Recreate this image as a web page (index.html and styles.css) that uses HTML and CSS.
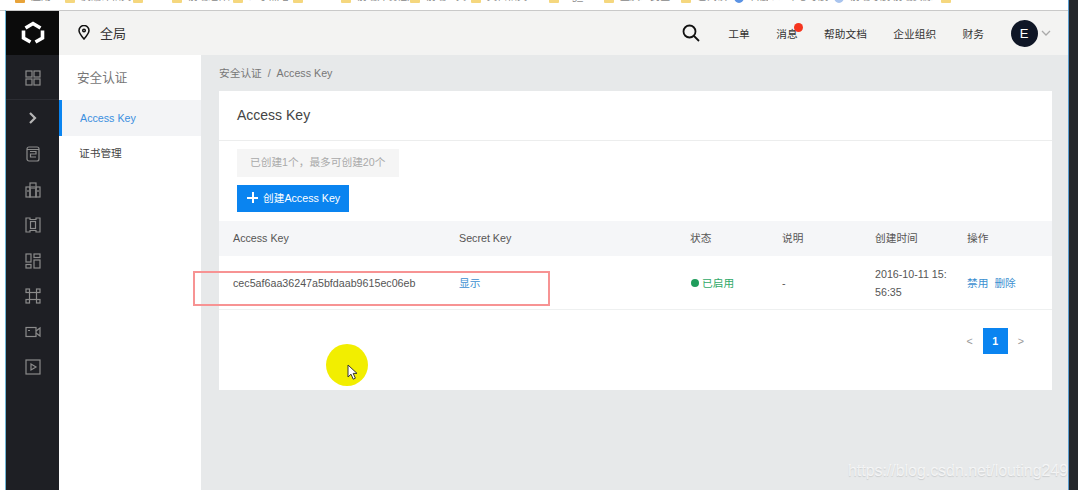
FILE: index.html
```html
<!DOCTYPE html>
<html lang="zh-CN">
<head>
    <meta charset="UTF-8">
    <title>Access Key</title>
    <link rel="stylesheet" href="styles.css">
</head>
<body>
<div class="screen">
    <!-- browser bookmarks, cut off by the capture -->
    <div class="bookmarks">
        <span class="mark"><i class="apps"></i>应用</span>
        <span class="mark"><i class="folder"></i>反编译相关</span>
        <span class="mark"><i class="folder"></i>AE</span>
        <span class="mark"><i class="folder"></i>前端组件库</span>
        <span class="mark"><i class="folder"></i>少了点啥</span>
        <span class="mark"><i class="folder"></i>html</span>
        <span class="mark"><i class="folder"></i>前端开发框架</span>
        <span class="mark"><i class="folder"></i>前端工具</span>
        <span class="mark"><i class="folder"></i>文档相关</span>
        <span class="mark"><i class="folder"></i>Vg_HS</span>
        <span class="mark"><i class="folder"></i>重庆人民医</span>
        <span class="mark"><i class="folder"></i>已阅读</span>
        <span class="mark"><i class="globe"></i>百度</span>
        <span class="mark">个人中心导航</span>
        <span class="mark"><i class="globe pale"></i>前端导航 前端资源</span>
        <span class="mark"><i class="folder"></i>Recent</span>
    </div>

    <div class="app">
        <nav class="rail">
            <div class="logo">
                <svg width="26" height="26" viewBox="0 0 26 26" fill="none" stroke="#fff" stroke-width="3.6">
                    <path d="M5.500 8 13 3.500 20.500 8"/>
                    <path d="M22.500 10.500v7.500l-7 4"/>
                    <path d="M3.500 10.500v7.500l7 4"/>
                </svg>
            </div>
            <div class="rail-item rail-first">
                <svg width="16" height="16" viewBox="0 0 16 16" fill="none" stroke="#8b8b8b" stroke-width="1.2">
                    <rect x="1" y="1" width="6" height="6"/><rect x="9" y="1" width="6" height="6"/>
                    <rect x="1" y="9" width="6" height="6"/><rect x="9" y="9" width="6" height="6"/>
                </svg>
            </div>
            <div class="rail-item rail-arrow">
                <svg width="10" height="14" viewBox="0 0 10 14" fill="none" stroke="#b5b5b5" stroke-width="2.2">
                    <path d="M2 2l5 5-5 5"/>
                </svg>
            </div>
            <div class="rail-item">
                <svg width="14" height="16" viewBox="0 0 14 16" fill="none" stroke="#8b8b8b" stroke-width="1.2">
                    <rect x="1" y="1" width="12" height="14" rx="2"/><path d="M4 5.500h6v2.500H4.500v3H10M1 3.500h12"/>
                </svg>
            </div>
            <div class="rail-item">
                <svg width="16" height="16" viewBox="0 0 16 16" fill="none" stroke="#8b8b8b" stroke-width="1.2">
                    <rect x="5" y="1" width="6" height="14"/><rect x="1" y="5" width="4" height="10"/><rect x="11" y="5" width="4" height="10"/>
                    <path d="M7 4v3M9 4v3M3 8v2M13 8v2"/>
                </svg>
            </div>
            <div class="rail-item">
                <svg width="16" height="16" viewBox="0 0 16 16" fill="none" stroke="#8b8b8b" stroke-width="1.2">
                    <path d="M1 1h4v1.500h6V1h4v14h-4v-1.500H5V15H1z"/><rect x="5.500" y="4.500" width="5" height="7"/>
                </svg>
            </div>
            <div class="rail-item">
                <svg width="16" height="16" viewBox="0 0 16 16" fill="none" stroke="#8b8b8b" stroke-width="1.2">
                    <rect x="1" y="1" width="5" height="8"/><rect x="1" y="11.500" width="5" height="3.500"/>
                    <rect x="9" y="1" width="6" height="3.500"/><rect x="9" y="7" width="6" height="8"/>
                </svg>
            </div>
            <div class="rail-item">
                <svg width="16" height="16" viewBox="0 0 16 16" fill="none" stroke="#8b8b8b" stroke-width="1.2">
                    <rect x="1" y="1" width="3.500" height="3.500"/><rect x="11.500" y="1" width="3.500" height="3.500"/>
                    <rect x="1" y="11.500" width="3.500" height="3.500"/><rect x="11.500" y="11.500" width="3.500" height="3.500"/>
                    <rect x="4.500" y="4.500" width="7" height="7"/>
                </svg>
            </div>
            <div class="rail-item">
                <svg width="16" height="12" viewBox="0 0 16 12" fill="none" stroke="#8b8b8b" stroke-width="1.2">
                    <rect x="1" y="1.500" width="10" height="9"/><path d="M11 5l4-3v8l-4-3M3 4.500h2"/>
                </svg>
            </div>
            <div class="rail-item">
                <svg width="16" height="16" viewBox="0 0 16 16" fill="none" stroke="#8b8b8b" stroke-width="1.2">
                    <rect x="1" y="1" width="14" height="14"/><path d="M6 5l5 3-5 3z"/>
                </svg>
            </div>
        </nav>

        <div class="content">
            <header class="topbar">
                <div class="region">
                    <svg width="12" height="15" viewBox="0 0 12 15" fill="none" stroke="#111" stroke-width="1.500">
                        <path d="M6 14C3 10.500 1 8 1 5.500a5 5 0 0 1 10 0C11 8 9 10.500 6 14z"/><circle cx="6" cy="5.500" r="1.300"/>
                    </svg>
                    <span>全局</span>
                </div>
                <div class="tools">
                    <svg class="search" width="18" height="18" viewBox="0 0 18 18" fill="none" stroke="#111" stroke-width="1.800">
                        <circle cx="7.500" cy="7.500" r="6"/><path d="M12 12l5 5"/>
                    </svg>
                    <span class="tool">工单</span>
                    <span class="tool msg">消息<b class="dot"></b></span>
                    <span class="tool">帮助文档</span>
                    <span class="tool">企业组织</span>
                    <span class="tool">财务</span>
                    <span class="avatar">E</span>
                    <svg width="10" height="6" viewBox="0 0 10 6" fill="none" stroke="#aaa" stroke-width="1.300">
                        <path d="M1 1l4 4 4-4"/>
                    </svg>
                </div>
            </header>

            <div class="body">
                <aside class="side">
                    <div class="side-title">安全认证</div>
                    <a class="side-item active">Access Key</a>
                    <a class="side-item">证书管理</a>
                </aside>

                <main class="main">
                    <div class="crumb">安全认证&nbsp;&nbsp;/&nbsp;&nbsp;Access Key</div>
                    <section class="card">
                        <h2>Access Key</h2>
                        <div class="actions">
                            <div class="notice">已创建1个，最多可创建20个</div>
                            <button class="create"><span class="plus"></span>创建Access Key</button>
                        </div>
                        <table>
                            <colgroup>
                                <col class="c1"><col class="c2"><col class="c3"><col class="c4"><col class="c5"><col class="c6">
                            </colgroup>
                            <thead>
                            <tr>
                                <th>Access Key</th>
                                <th>Secret Key</th>
                                <th>状态</th>
                                <th>说明</th>
                                <th>创建时间</th>
                                <th>操作</th>
                            </tr>
                            </thead>
                            <tbody>
                            <tr>
                                <td>cec5af6aa36247a5bfdaab9615ec06eb</td>
                                <td><a class="link">显示</a></td>
                                <td class="on"><i class="on-dot"></i>已启用</td>
                                <td>-</td>
                                <td class="time">2016-10-11 15:56:35</td>
                                <td><a class="link">禁用</a><a class="link del">删除</a></td>
                            </tr>
                            </tbody>
                        </table>
                        <div class="pager">
                            <span class="arrow">&lt;</span>
                            <span class="page-no">1</span>
                            <span class="arrow">&gt;</span>
                        </div>
                    </section>
                </main>
            </div>
        </div>
    </div>

    <!-- annotations drawn over the recording -->
    <div class="red-box"></div>
    <div class="spot"></div>
    <svg class="cursor" width="12" height="17" viewBox="0 0 12 17">
        <path d="M1 1v12l3-2.800 2.200 5 2.200-1-2.200-4.800H10z" fill="#fff" stroke="#333" stroke-width="1"/>
    </svg>
    <div class="watermark">https://blog.csdn.net/louting249</div>
</div>
</body>
</html>
```
FILE: styles.css
```css
* {
    box-sizing: border-box;
}
body {
    margin: 0;
    font-family: "Liberation Sans", "Noto Sans CJK SC", sans-serif;
    font-size: 10.7px;
    color: #555;
    overflow: hidden;
}
.screen {
    position: relative;
    width: 1078px;
    height: 490px;
    overflow: hidden;
    background-color: #fff;
    display: flex;
    flex-direction: column;
    padding-right: 8px;
}
.screen::after {
    content: "";
    position: absolute;
    top: 0;
    right: 0;
    width: 9px;
    height: 100%;
    background-color: #25272b;
    border-left: 1px solid #5a9ccf;
}

/* bookmarks */
.bookmarks {
    height: 11px;
    flex-shrink: 0;
    overflow: hidden;
    border-bottom: 1px solid #c9c9c9;
    padding-left: 15px;
    display: grid;
    grid-template-columns: 50px 68px 39px 61px 60px 48px 69px 61px 78px 55px 77px 53px 34px 66px 107px 100px;
    font-size: 10px;
    line-height: 12px;
    color: #888;
}
.mark {
    display: flex;
    gap: 6px;
    white-space: nowrap;
    overflow: hidden;
    margin-top: -9px;
}
.folder, .apps, .globe {
    display: block;
    width: 10px;
    height: 12px;
    flex-shrink: 0;
    border-radius: 1px;
    background-color: #f5d77e;
}
.apps {
    background-color: #e8a33a;
}
.globe {
    background-color: #5b93e4;
    border-radius: 50%;
}
.pale {
    background-color: #a9c4ee;
}

/* layout */
.app {
    flex: 1;
    display: flex;
    padding-left: 5px;
    min-height: 0;
    position: relative;
}
.app::before {
    content: "";
    position: absolute;
    left: 5px;
    top: -1px;
    bottom: 0;
    width: 1px;
    background-color: #6fb7d6;
    z-index: 1;
}
.rail {
    width: 54px;
    flex-shrink: 0;
    background-color: #1e1f24;
}
.logo {
    height: 44px;
    background-color: #0b0b0b;
    display: flex;
    align-items: center;
    justify-content: center;
    padding-left: 1px;
}
.rail-item {
    height: 35.5px;
    display: flex;
    align-items: center;
    justify-content: center;
    padding-left: 1px;
}
.rail-first {
    height: 45px;
    padding-top: 2px;
    border-bottom: 1px solid #2c2d33;
}
.rail-arrow {
    height: 36.5px;
}
.content {
    flex: 1;
    min-width: 0;
    display: flex;
    flex-direction: column;
}
.topbar {
    height: 44px;
    flex-shrink: 0;
    background-color: #f3f3f2;
    display: flex;
    align-items: center;
    justify-content: space-between;
    padding: 0 19px;
    color: #333;
}
.region {
    display: flex;
    align-items: center;
    gap: 10px;
    padding-bottom: 2px;
    font-size: 13px;
}
.tools {
    display: flex;
    align-items: center;
    gap: 26.5px;
}
.search {
    margin-right: 2px;
}
.tool {
    position: relative;
}
.dot {
    position: absolute;
    top: -3px;
    right: -5px;
    width: 9px;
    height: 9px;
    border-radius: 50%;
    background-color: #f5351f;
}
.avatar {
    width: 27px;
    height: 27px;
    margin-right: -23px;
    border-radius: 50%;
    background-color: #0f1626;
    color: #fff;
    font-size: 13px;
    display: flex;
    align-items: center;
    justify-content: center;
}
.body {
    flex: 1;
    display: flex;
    min-height: 0;
}

/* left menu */
.side {
    width: 142px;
    flex-shrink: 0;
    background-color: #fff;
}
.side-title {
    height: 45px;
    line-height: 46px;
    padding-left: 18px;
    font-size: 12.6px;
    color: #777;
}
.side-item {
    display: block;
    height: 36px;
    line-height: 35px;
    padding-left: 20px;
    color: #444;
}
.active {
    line-height: 36px;
    background-color: #f3f4f6;
    border-left: 3px solid #0a84f0;
    padding-left: 18px;
    color: #3b8fe0;
}

/* main area */
.main {
    flex: 1;
    min-width: 0;
    background-color: #e7e9ea;
    padding: 0 18px;
}
.crumb {
    height: 36px;
    line-height: 36px;
    color: #777;
}
.card {
    height: 299px;
    background-color: #fff;
}
.card h2 {
    margin: 0;
    height: 50px;
    line-height: 48px;
    padding-left: 18px;
    font-size: 14px;
    font-weight: normal;
    color: #444;
    border-bottom: 1px solid #eceded;
}
.actions {
    padding: 8px 18px 0;
    height: 80px;
}
.notice {
    width: 162px;
    height: 28px;
    line-height: 26px;
    padding-left: 13px;
    background-color: #f5f5f5;
    color: #aaa;
}
.create {
    display: flex;
    align-items: center;
    gap: 5px;
    width: 112px;
    height: 27px;
    margin-top: 8px;
    padding: 0 0 2px 10px;
    border: none;
    background-color: #0a84f0;
    color: #fff;
    font-family: inherit;
    font-size: 10.7px;
}
.plus {
    position: relative;
    display: block;
    width: 11px;
    height: 11px;
}
.plus::before, .plus::after {
    content: "";
    position: absolute;
    background-color: #fff;
}
.plus::before {
    left: 0;
    top: 4.5px;
    width: 11px;
    height: 2px;
}
.plus::after {
    left: 4.5px;
    top: 0;
    width: 2px;
    height: 11px;
}

/* table */
table {
    width: 100%;
    border-collapse: collapse;
    table-layout: fixed;
}
.c1 { width: 226px; }
.c2 { width: 231px; }
.c3 { width: 92px; }
.c4 { width: 93px; }
.c5 { width: 92px; }
.c6 { width: 99px; }
th, td {
    padding: 0 0 0 14px;
    text-align: left;
    font-weight: normal;
}
th {
    height: 35px;
    padding-bottom: 2px;
    background-color: #f5f6f8;
}
td {
    height: 53px;
    padding-top: 2px;
    line-height: 18px;
    border-bottom: 1px solid #eef0f0;
}
.time {
    padding-right: 6px;
    word-break: break-all;
}
.link {
    color: #3b8fd0;
}
.del {
    margin-left: 6px;
}
.on {
    color: #2fa968;
}
.on-dot {
    display: inline-block;
    width: 8px;
    height: 8px;
    margin: 0 3px 0 1px;
    border-radius: 50%;
    background-color: #1f9d5c;
}

/* pagination */
.pager {
    display: flex;
    justify-content: flex-end;
    align-items: center;
    gap: 10px;
    padding: 18px 28px 0 0;
}
.arrow {
    color: #999;
}
.page-no {
    width: 25px;
    height: 26px;
    line-height: 26px;
    text-align: center;
    background-color: #0a84f0;
    color: #fff;
    font-weight: bold;
}

/* annotations */
.red-box {
    position: absolute;
    left: 193px;
    top: 271px;
    width: 357px;
    height: 35px;
    border: 2px solid #f79393;
}
.spot {
    position: absolute;
    left: 326px;
    top: 344px;
    width: 42px;
    height: 42px;
    border-radius: 50%;
    background-color: #f2ee00;
}
.cursor {
    position: absolute;
    left: 347px;
    top: 364px;
}
.watermark {
    position: absolute;
    left: 848px;
    top: 462px;
    font-size: 15.9px;
    line-height: 18px;
    color: rgba(255, 255, 255, 0.7);
    text-shadow: 0 1px 1px rgba(0, 0, 0, 0.12);
    white-space: nowrap;
    z-index: 2;
}
```
